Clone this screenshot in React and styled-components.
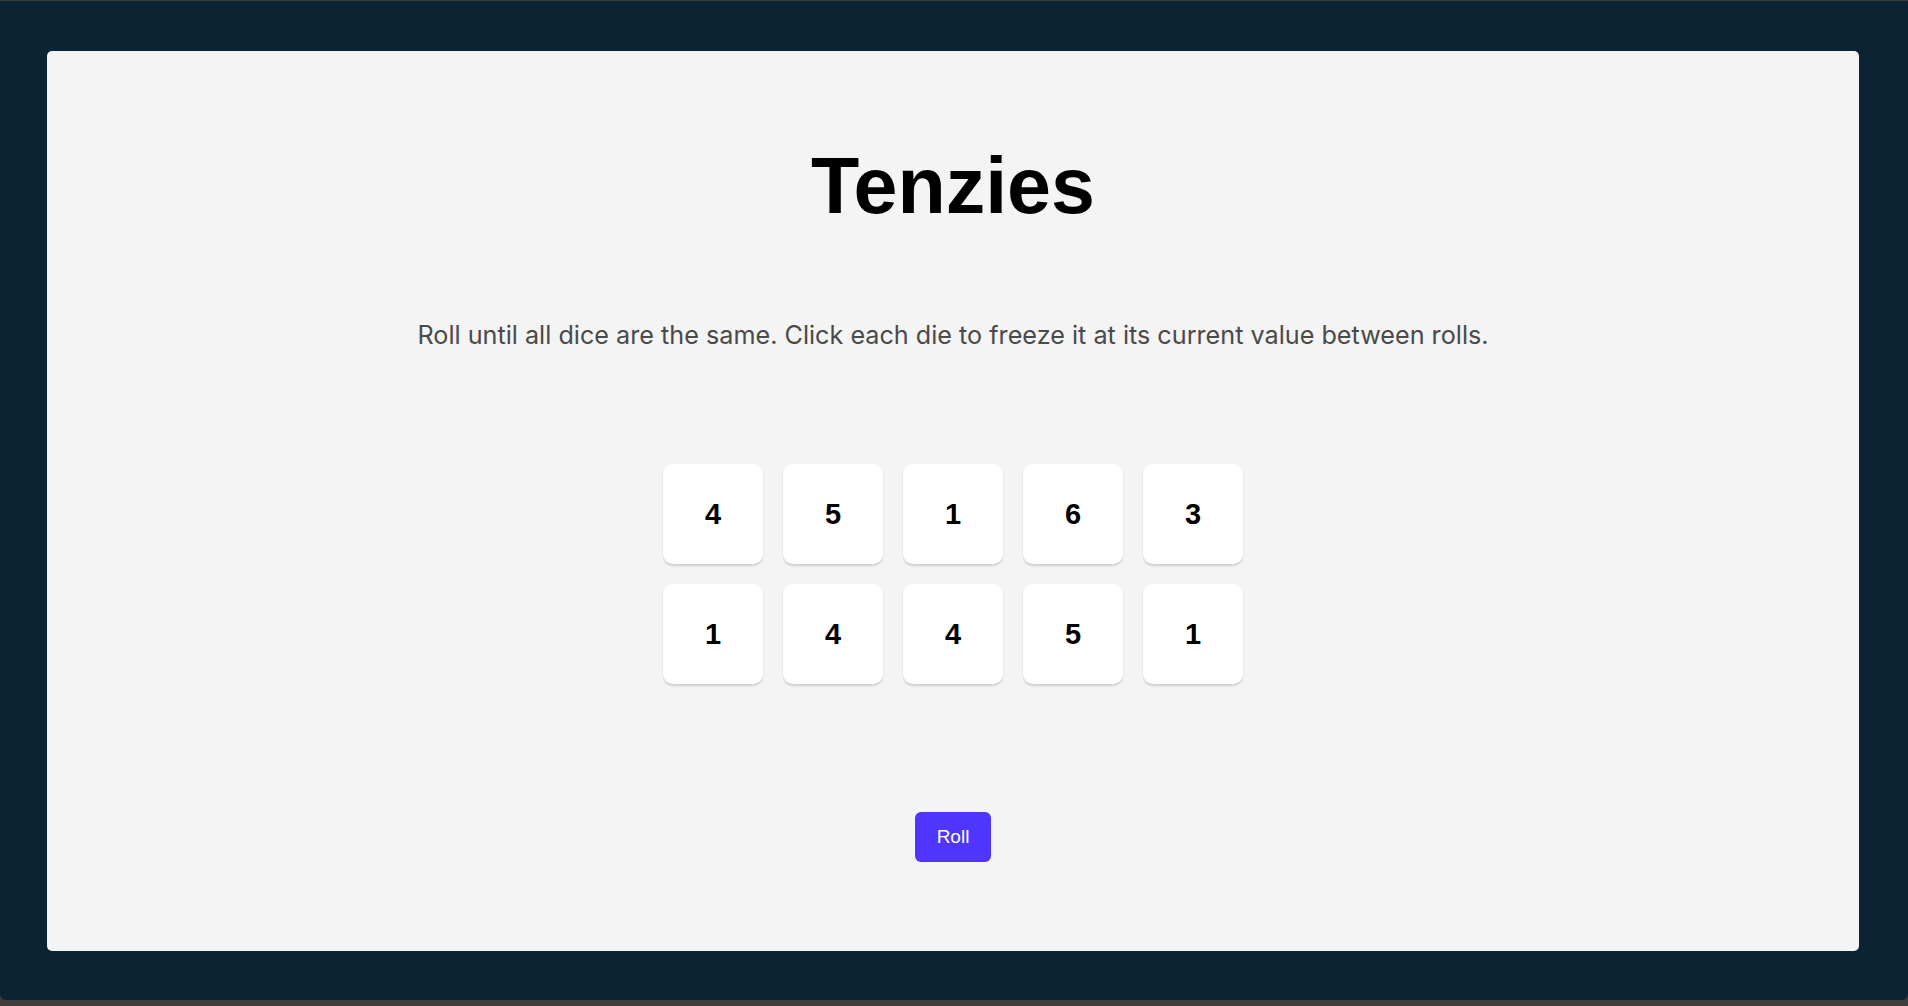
import React, { useState } from 'react'
import styled, { createGlobalStyle } from 'styled-components'

const GlobalStyle = createGlobalStyle`
  html, body {
    margin: 0;
    padding: 0;
    background: #3e3e3e;
  }
  #root {
    padding-top: 1px;
  }
`

const Backdrop = styled.main`
  box-sizing: border-box;
  height: 999px;
  padding: 50px 49px 0 47px;
  background: #0b2333;
  border-radius: 0 0 6px 6px;
`

const Board = styled.section`
  box-sizing: border-box;
  height: 900px;
  padding-top: 95px;
  display: flex;
  flex-direction: column;
  align-items: center;
  background: #f4f4f4;
  border-radius: 5px;
`

const Title = styled.h1`
  margin: 0;
  font-family: 'Liberation Sans', Arial, sans-serif;
  font-weight: 700;
  font-size: 79px;
  line-height: 1;
  color: #000;
`

const Instructions = styled.p`
  margin: 95px 0 0;
  font-family: Inter, 'Noto Sans', sans-serif;
  font-size: 25.2px;
  line-height: 1.2;
  color: #4a4a4a;
  text-align: center;
`

const DiceGrid = styled.div`
  margin-top: 114px;
  display: grid;
  grid-template-columns: repeat(5, 100px);
  grid-auto-rows: 100px;
  gap: 20px;
`

const Die = styled.button`
  display: flex;
  align-items: center;
  justify-content: center;
  padding: 0;
  border: none;
  border-radius: 10px;
  background: ${(props) => (props.held ? '#59e391' : '#fff')};
  box-shadow: 0 2px 2px rgba(0, 0, 0, 0.15);
  font-family: 'Liberation Sans', Arial, sans-serif;
  font-weight: 700;
  font-size: 29px;
  color: #000;
  cursor: pointer;
`

const RollButton = styled.button`
  margin-top: 128px;
  width: 76px;
  height: 50px;
  border: none;
  border-radius: 6px;
  background: #5035ff;
  color: #fff;
  font-family: 'Liberation Sans', Arial, sans-serif;
  font-size: 19px;
  cursor: pointer;
`

const startValues = [4, 5, 1, 6, 3, 1, 4, 4, 5, 1]

export default function App() {
  const [dice, setDice] = useState(
    startValues.map((value, i) => ({ id: i, value, held: false }))
  )

  const toggle = (id) =>
    setDice((old) => old.map((d) => (d.id === id ? { ...d, held: !d.held } : d)))

  const roll = () =>
    setDice((old) =>
      old.map((d) => (d.held ? d : { ...d, value: Math.ceil(Math.random() * 6) }))
    )

  return (
    <>
      <GlobalStyle />
      <Backdrop>
        <Board>
          <Title>Tenzies</Title>
          <Instructions>
            Roll until all dice are the same. Click each die to freeze it at its
            current value between rolls.
          </Instructions>
          <DiceGrid>
            {dice.map((d) => (
              <Die key={d.id} held={d.held} onClick={() => toggle(d.id)}>
                {d.value}
              </Die>
            ))}
          </DiceGrid>
          <RollButton onClick={roll}>Roll</RollButton>
        </Board>
      </Backdrop>
    </>
  )
}
